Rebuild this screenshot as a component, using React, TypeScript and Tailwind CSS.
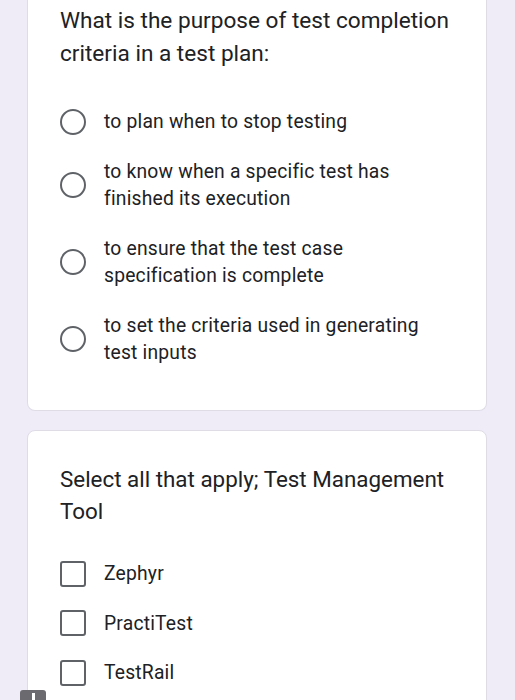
import React from 'react';

const radioOptions = [
  ['to plan when to stop testing'],
  ['to know when a specific test has', 'finished its execution'],
  ['to ensure that the test case', 'specification is complete'],
  ['to set the criteria used in generating', 'test inputs'],
];

const checkOptions = ['Zephyr', 'PractiTest', 'TestRail'];

const App: React.FC = () => {
  return (
    <div
      className="relative min-h-[700px] w-[515px] overflow-hidden bg-[#efebf7] pl-[27px] pr-[28px]"
      style={{ fontFamily: 'Roboto, "Liberation Sans", sans-serif' }}
    >
      {/* first question, scrolled partly out of view */}
      <div className="rounded-b-lg border border-t-0 border-[#dfdce6] bg-white pl-[32px] pr-[16px] pt-[4px] pb-[44px]">
        <h2 className="text-[22.6px] leading-[33px] text-[#202124]">
          What is the purpose of test completion criteria in a test plan:
        </h2>
        <div className="mt-[38px] flex flex-col gap-[23px]">
          {radioOptions.map((lines, i) => (
            <label key={i} className="flex items-center gap-[18px]">
              <span className="h-[26px] w-[26px] shrink-0 rounded-full border-[2.5px] border-[#5f6368]" />
              <span className="text-[19.3px] leading-[27px] tracking-[0.2px] text-[#202124]">
                {lines.map((l, j) => (
                  <span key={j} className="block">
                    {l}
                  </span>
                ))}
              </span>
            </label>
          ))}
        </div>
      </div>

      {/* second question */}
      <div className="mt-[19px] rounded-lg border border-[#dfdce6] bg-white pl-[32px] pr-[16px] pt-[32px] pb-[40px]">
        <h2 className="text-[22.4px] leading-[32px] text-[#202124]">
          Select all that apply; Test Management Tool
        </h2>
        <div className="mt-[33px] flex flex-col gap-[22.5px]">
          {checkOptions.map((name) => (
            <label key={name} className="flex items-center gap-[18px]">
              <span className="h-[26px] w-[26px] shrink-0 rounded-[3px] border-[2.5px] border-[#5f6368]" />
              <span className="text-[19.3px] leading-[27px] tracking-[0.2px] text-[#202124]">{name}</span>
            </label>
          ))}
        </div>
      </div>

      {/* little tab at the bottom edge */}
      <div className="absolute left-[20px] top-[690px] flex h-[14px] w-[26px] justify-center rounded-t-[3px] bg-[#6b6b6f]">
        <span className="mt-[3px] h-[8px] w-[3px] bg-white" />
      </div>
    </div>
  );
};

export default App;
